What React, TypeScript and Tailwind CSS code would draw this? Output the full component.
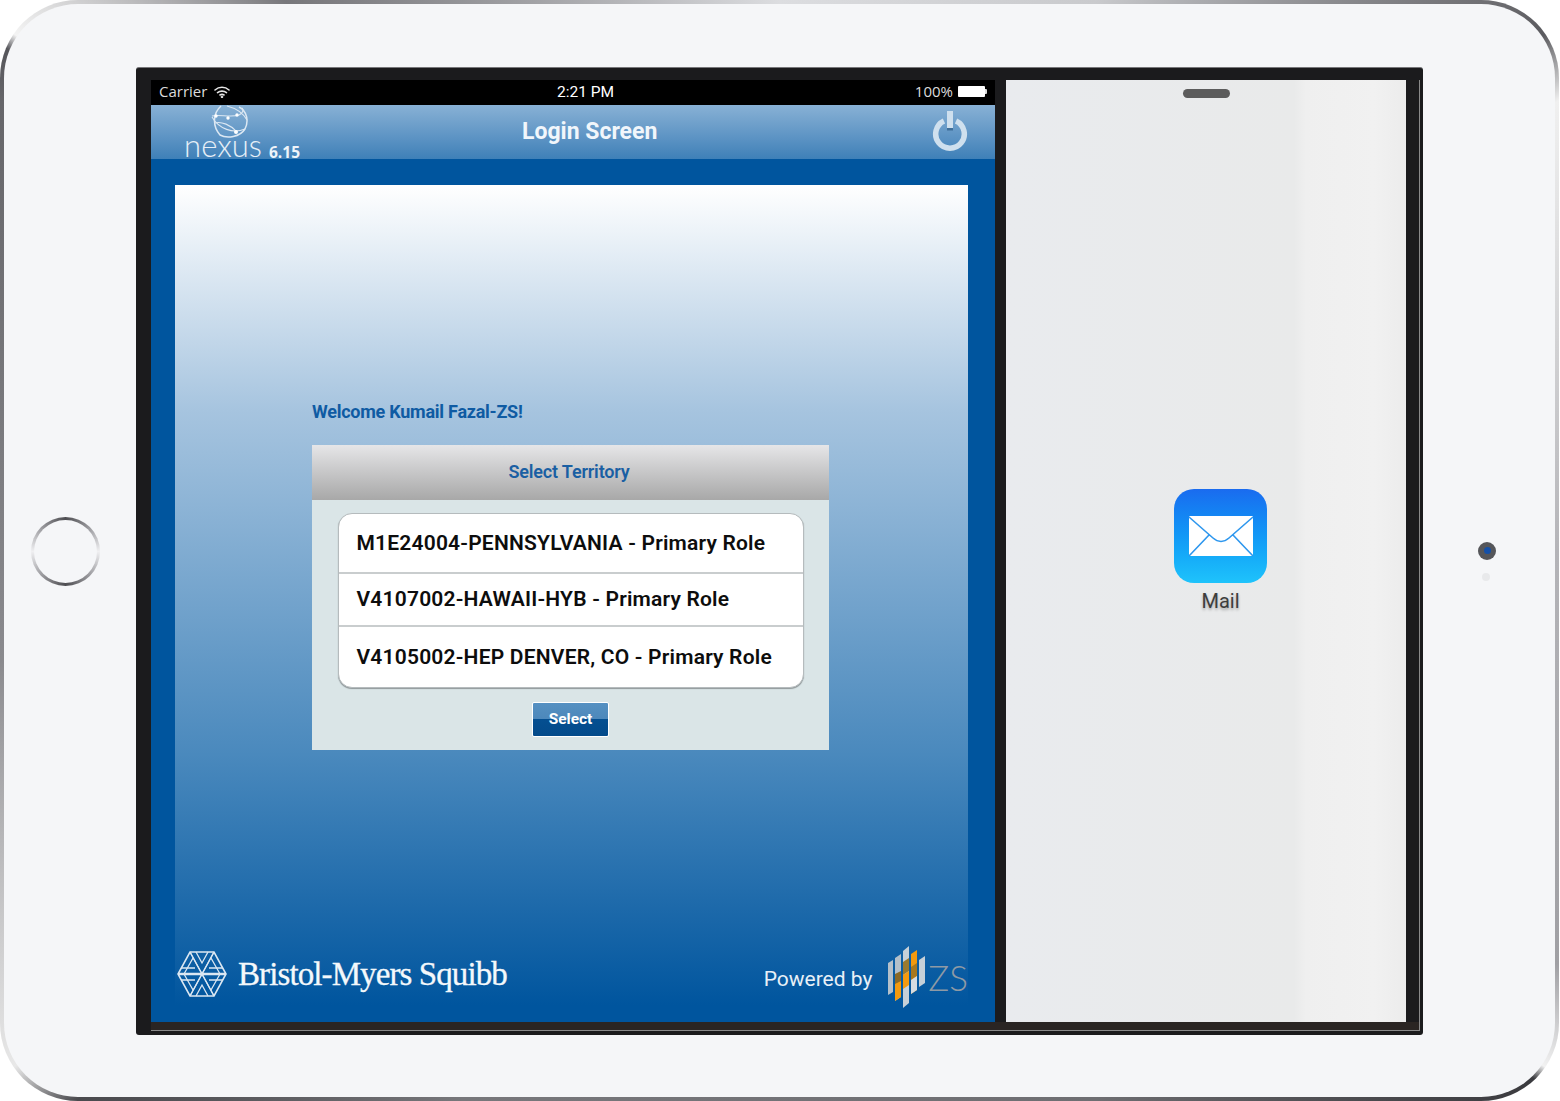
import React from "react";

const territories = [
  { label: "M1E24004-PENNSYLVANIA - Primary Role", height: "h-[60px]" },
  { label: "V4107002-HAWAII-HYB - Primary Role", height: "h-[53px]" },
  { label: "V4105002-HEP DENVER, CO - Primary Role", height: "h-[60px]" },
];

const Wifi = () => (
  <svg width="16" height="12" viewBox="0 0 16 12" fill="none" stroke="#e4e4e4" strokeWidth="1.6" strokeLinecap="round">
    <path d="M1 4 C5 0.4 11 0.4 15 4" />
    <path d="M3.5 6.6 C6 4.6 10 4.6 12.5 6.6" />
    <path d="M6 9 C7.2 8.1 8.8 8.1 10 9" />
    <circle cx="8" cy="10.8" r="0.5" fill="#e4e4e4" />
  </svg>
);

const Battery = () => (
  <div className="flex items-center">
    <div className="h-[11px] w-[27px] rounded-[1px] bg-white" />
    <div className="h-[5px] w-[2px] rounded-r-[1px] bg-[#dddddd]" />
  </div>
);

const Globe = () => (
  <svg width="42" height="33" viewBox="0 0 42 33" fill="none" stroke="#dce8f3" strokeWidth="1.1">
    <path d="M14 1 C6 8 5 21 13 30 C20 34 33 32 38 24 C42 16 40 6 32 2" strokeWidth="1.5" />
    <path d="M5 11 C12 9 24 13 32 10 C36 8 37 5 35 3" />
    <path d="M5 12 C12 24 26 29 38 24" />
    <path d="M20 1 C28 3 36 8 40 15" />
    <path d="M8 18 C14 16 24 20 30 27" />
    <circle cx="9" cy="11" r="1.7" fill="#ffffff" stroke="none" />
    <circle cx="21" cy="13" r="1.7" fill="#ffffff" stroke="none" />
    <circle cx="30" cy="10" r="1.7" fill="#ffffff" stroke="none" />
    <circle cx="29" cy="27" r="2" fill="#ffffff" stroke="none" />
  </svg>
);

const PowerIcon = () => (
  <svg width="36" height="42" viewBox="0 0 36 42" fill="none">
    <path d="M11.96 11 A14.3 14.3 0 1 0 24.04 11" stroke="#cfe0ee" strokeWidth="5.5" />
    <rect x="15" y="1" width="6" height="19" fill="#cfe0ee" />
    <rect x="15" y="18" width="6" height="2.5" fill="#3f6f9a" />
  </svg>
);

const BmsMark = () => (
  <svg width="50" height="46" viewBox="0 0 50 46" fill="none" stroke="#dbe7f2" strokeWidth="1.3">
    <path d="M13 1 H37 L49 23 L37 45 H13 L1 23 Z" strokeWidth="1.6" />
    <path d="M1 23 H49" strokeWidth="2.4" />
    <path d="M13 1 L37 45 M37 1 L13 45" />
    <path d="M13 1 L25 23 L37 1 M19 1 L25 12 L31 1" />
    <path d="M13 45 L25 23 L37 45 M19 45 L25 34 L31 45" />
    <path d="M7 23 L16 7 M43 23 L34 7" />
    <path d="M7 23 L16 39 M43 23 L34 39" />
    <path d="M4 17 H18 M46 17 H32 M4 29 H18 M46 29 H32" />
  </svg>
);

const ZsMark = () => (
  <svg width="40" height="64" viewBox="0 0 40 64" className="shrink-0">
    <polygon points="1,18 6,15 6,47 1,50" fill="#b4c0ca" />
    <polygon points="8,13 14,9 14,52 8,56" fill="#b4c0ca" />
    <polygon points="8,29 14,26 14,43 8,46" fill="#8a6a28" />
    <polygon points="8,39 14,36 14,52 8,56" fill="#f39a0f" />
    <polygon points="16,6 22,1 22,58 16,63" fill="#c6d0d8" />
    <polygon points="16,17 22,13 22,26 16,30" fill="#9a7a30" />
    <polygon points="16,30 22,26 22,40 16,44" fill="#f39a0f" />
    <polygon points="24,9 30,5 30,45 24,49" fill="#f39a0f" />
    <polygon points="24,22 30,18 30,31 24,35" fill="#a8781e" />
    <polygon points="24,35 30,31 30,45 24,49" fill="#d5dce2" />
    <polygon points="32,15 38,11 38,38 32,42" fill="#c6d0d8" />
  </svg>
);

const MailGlyph = () => (
  <svg width="66" height="42" viewBox="0 0 66 42">
    <rect x="1" y="1" width="64" height="40" rx="1" fill="#ffffff" />
    <path
      d="M1 2 L25 23 C30 27.5 36 27.5 41 23 L65 2 M1 41 L21 20 M65 41 L45 20"
      fill="none"
      stroke="#2e97ee"
      strokeWidth="1.6"
    />
  </svg>
);

const StatusBar = () => (
  <div className="flex h-[25px] items-center bg-black pl-2 pr-2 font-['Open_Sans',sans-serif] text-[15px] text-[#dcdcdc]">
    <div className="flex w-[300px] items-center gap-[7px] pb-[1px]">
      <span>Carrier</span>
      <Wifi />
    </div>
    <span className="ml-[98px] w-[80px] pt-[2px] font-['Roboto',sans-serif] text-[15.5px] text-white">2:21 PM</span>
    <div className="ml-auto flex items-center gap-[5px] pb-[1px]">
      <span>100%</span>
      <Battery />
    </div>
  </div>
);

const Header = () => (
  <div className="flex h-[54px] items-start bg-gradient-to-b from-[#88b1d5] to-[#3e80b8] pl-[34px] pr-[27px]">
    <div className="flex w-[300px] items-end">
      <div className="flex w-[76px] flex-col items-center">
        <div className="ml-[9px] h-[33px]">
          <Globe />
        </div>
        <span className="mt-[-8px] font-['Lato',sans-serif] text-[31px] font-light leading-[30px] text-[#e6eff7]">
          nexus
        </span>
      </div>
      <span className="mb-[-2px] ml-2 font-['Open_Sans',sans-serif] text-[15.5px] font-bold leading-5 text-[#eef4fa]">
        6.15
      </span>
    </div>
    <h1 className="ml-[37px] mt-[12px] font-['Roboto',sans-serif] text-[23px] font-bold leading-[30px] text-[#f1f6fb]">
      Login Screen
    </h1>
    <div className="ml-auto mt-[5px]">
      <PowerIcon />
    </div>
  </div>
);

const TerritoryPanel = () => (
  <div className="w-[517px] bg-[#dae5e7]">
    <div className="flex h-[55px] items-center justify-center bg-gradient-to-b from-[#e6e6e8] to-[#a8a8a8] pb-[2px] pr-[3px] font-['Roboto',sans-serif] text-[18px] font-semibold tracking-[-0.15px] text-[#1a5fa3]">
      Select Territory
    </div>
    <div className="flex flex-col items-center px-[26px] pt-[13px]">
      <ul className="w-[466px] divide-y-2 divide-[#c9cdce] rounded-[14px] border border-[#b5bbbd] bg-white shadow-[0_1px_1px_#8f9799]">
        {territories.map((t) => (
          <li
            key={t.label}
            className={`flex items-center pl-[18px] pt-[2px] font-['Roboto',sans-serif] text-[21px] font-semibold tracking-[0.2px] text-[#0d0d0d] ${t.height}`}
          >
            {t.label}
          </li>
        ))}
      </ul>
      <button className="mb-[13px] mt-[14px] flex h-[35px] w-[77px] items-center justify-center rounded-[2px] border border-white bg-[linear-gradient(#5590c2_0%,#4d88bb_48%,#054f91_50%,#034a8a_100%)] pt-[2px] font-['Roboto',sans-serif] text-[15.5px] font-bold text-white">
        Select
      </button>
    </div>
  </div>
);

const Footer = () => (
  <div className="mt-auto flex items-end justify-between pb-[13px] pl-[2px]">
    <div className="mb-[12px] flex items-center gap-[11px]">
      <BmsMark />
      <span className="font-['Liberation_Serif',serif] text-[33px] leading-[44px] tracking-[-0.9px] text-[#f4f8fb] [-webkit-text-stroke:0.3px_#f4f8fb]">
        Bristol-Myers Squibb
      </span>
    </div>
    <div className="flex items-center">
      <span className="mr-[15px] mt-[6px] font-['Roboto',sans-serif] text-[21px] text-[#e8f0f7]">Powered by</span>
      <ZsMark />
      <span className="ml-[1px] font-['Lato',sans-serif] text-[35px] font-light leading-[40px] text-[#8f9aa5]">ZS</span>
    </div>
  </div>
);

const LoginApp = () => (
  <div className="flex w-[844px] flex-col bg-[#00559e]">
    <StatusBar />
    <Header />
    <div className="ml-[24px] mr-[27px] mt-[26px] flex flex-1 flex-col bg-[linear-gradient(#ffffff_0%,#a6c4df_27%,#4a89bd_68%,#00559e_98%)] pt-[215px]">
      <div className="flex flex-col pl-[137px]">
        <p className="mb-[21px] font-['Roboto',sans-serif] text-[18px] font-bold leading-6 tracking-[-0.25px] text-[#0f5ba3]">
          Welcome Kumail Fazal-ZS!
        </p>
        <TerritoryPanel />
      </div>
      <Footer />
    </div>
  </div>
);

const MailPane = () => (
  <div className="flex w-[400px] flex-col items-center bg-[linear-gradient(90deg,#e9ebee_0%,#e9eaea_72%,#efefef_75%,#f1f1f1_92%,#ececec_100%)]">
    <div className="mt-[9px] h-[9px] w-[47px] rounded-full bg-[#5c5c5c]" />
    <div className="ml-[29px] mt-[391px] flex flex-col items-center">
      <div className="flex h-[94px] w-[93px] items-center justify-center rounded-[20px] bg-gradient-to-b from-[#1a6bef] to-[#1fc3fb]">
        <MailGlyph />
      </div>
      <span className="mt-[6px] font-['Roboto',sans-serif] text-[20px] leading-6 text-[#3d3d3d] [text-shadow:0_2px_3px_rgba(0,0,0,0.3)]">
        Mail
      </span>
    </div>
  </div>
);

export default function App() {
  return (
    <div className="h-[1101px] w-[1560px] bg-white">
      <div className="h-[1101px] w-[1559px] rounded-[78px] bg-[conic-gradient(#dcdde0_0deg,#c9cacd_30deg,#707074_52deg,#5a5a5e_56deg,#f0f0f0_60deg,#b4b4b8_90deg,#a0a0a4_118deg,#f2f2f2_124deg,#3a3a3e_125deg,#6e6e72_150deg,#77777b_210deg,#4a4a4e_232deg,#e8e8e8_236deg,#8a8a8e_262deg,#66666a_300deg,#55555a_303deg,#f4f4f4_304deg,#77777b_318deg,#dcdde0_360deg)] p-[4px]">
        <div className="flex h-full w-full items-center rounded-[74px] bg-[#f5f6f8]">
          <div className="flex w-[132px] justify-start pl-[27px]">
            <div className="mt-[2px] rounded-full bg-[conic-gradient(#4e4e52_0deg,#9a9a9e_45deg,#f0f0f2_90deg,#9a9a9e_135deg,#4e4e52_180deg,#9a9a9e_225deg,#f0f0f2_270deg,#9a9a9e_315deg,#4e4e52_360deg)] p-[3px]">
              <div className="h-[63px] w-[63px] rounded-full bg-[#f5f6f8]" />
            </div>
          </div>
          <div className="h-[968px] w-[1287px] rounded-[3px] border-t border-[#77777a] bg-[#1b1b1d] pl-[15px] pt-[12px]">
            <div className="w-[1269px] border-r border-[#8a8a8a]">
              <div className="flex h-[942px] gap-[11px]">
                <LoginApp />
                <MailPane />
              </div>
              <div className="h-[9px] border-b border-[#8a8a8a] bg-[#2a2523]" />
            </div>
          </div>
          <div className="flex flex-1 flex-col items-start gap-[13px] pl-[55px] pt-[21px]">
            <div className="flex h-[18px] w-[18px] items-center justify-center rounded-full bg-[#55565a]">
              <div className="h-[7px] w-[7px] rounded-full bg-[#1450a8]" />
            </div>
            <div className="ml-[4px] h-[8px] w-[8px] rounded-full bg-[#e8e9eb]" />
          </div>
        </div>
      </div>
    </div>
  );
}
